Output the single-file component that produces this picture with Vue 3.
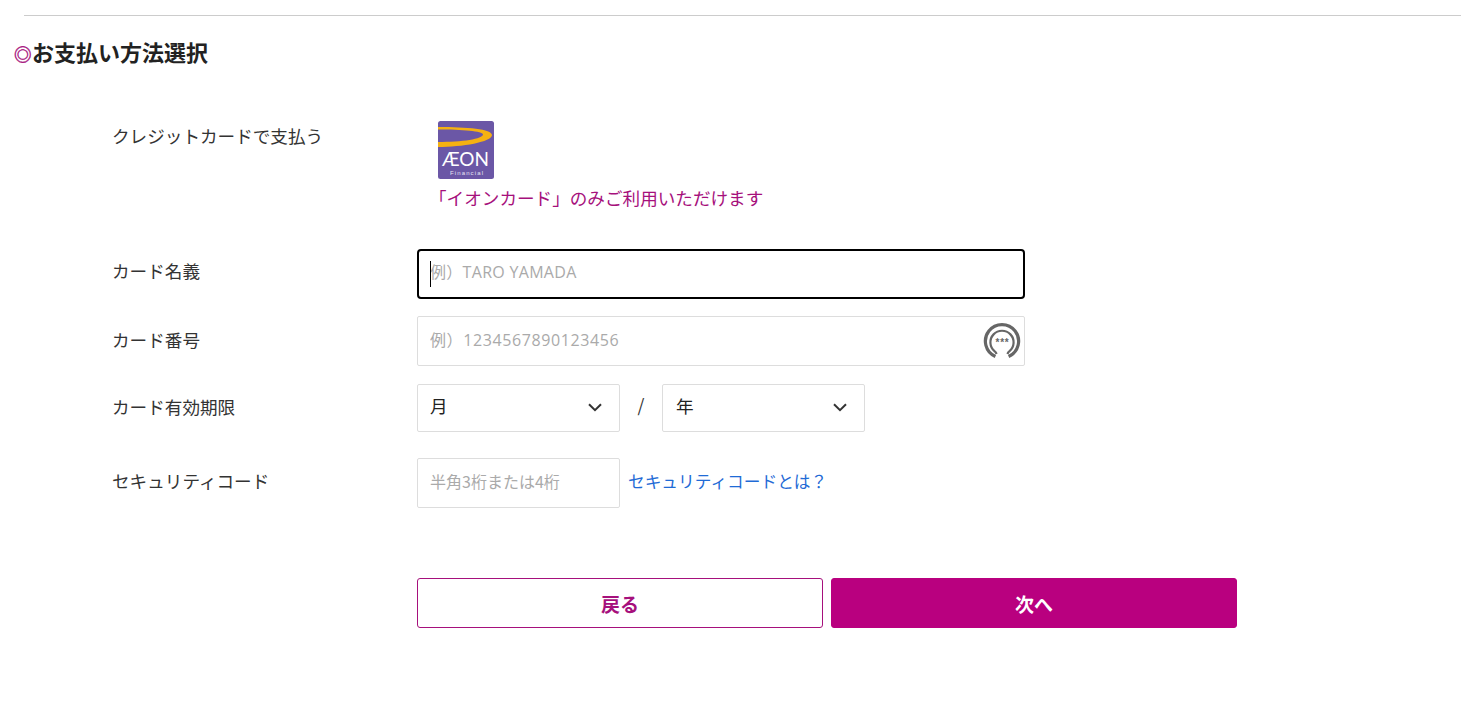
<script setup>
const months = ['月', '1', '2', '3', '4', '5', '6', '7', '8', '9', '10', '11', '12']
const years = ['年', '2024', '2025', '2026', '2027', '2028']
</script>

<template>
  <main class="page">
    <hr class="rule" />
    <h2 class="title"><span class="mark">◎</span>お支払い方法選択</h2>

    <section class="row row-card">
      <div class="label top">クレジットカードで支払う</div>
      <div class="card-info">
        <svg class="logo" width="58" height="60" viewBox="0 0 58 60" aria-label="AEON Financial">
          <rect x="1" y="1" width="56" height="58" rx="2.5" fill="#6b57a6" />
          <path d="M1 7 C30 7 55 9 55 15 C55 22 25 27 1 27 L1 22 C25 22 46 19 46 14.5 C46 11 25 9.5 1 9.5 Z" fill="#f5b112" />
          <text x="28.5" y="46" class="logo-word" textLength="47" lengthAdjust="spacingAndGlyphs">ÆON</text>
          <text x="29.5" y="55" class="logo-sub" textLength="33">Financial</text>
        </svg>
        <p class="note">「イオンカード」のみご利用いただけます</p>
      </div>
    </section>

    <section class="row row-name">
      <label class="label" for="holder">カード名義</label>
      <div class="field wide">
        <input id="holder" class="input focused" type="text" placeholder="例）TARO YAMADA" />
        <span class="caret"></span>
      </div>
    </section>

    <section class="row row-number">
      <label class="label" for="number">カード番号</label>
      <div class="field wide">
        <input id="number" class="input digits" type="text" placeholder="例）1234567890123456" />
        <svg class="mask-icon" width="38" height="38" viewBox="0 0 38 38">
          <path d="M12.4 34.5 A16.6 16.6 0 1 1 25.6 34.5" fill="none" stroke="#666" stroke-width="3.2" />
          <path d="M13.6 32 C13 30.5 12.5 30 11.5 29.2 A11.6 11.6 0 1 1 26.5 29.2 C25.5 30 25 30.5 24.4 32" fill="none" stroke="#666" stroke-width="2.2" />
          <text x="19.5" y="23.5" class="stars">***</text>
        </svg>
      </div>
    </section>

    <section class="row row-expiry">
      <div class="label">カード有効期限</div>
      <div class="expiry">
        <div class="select-wrap">
          <select class="select month" aria-label="月">
            <option v-for="m in months" :key="m">{{ m }}</option>
          </select>
          <svg class="chevron" width="14" height="9" viewBox="0 0 14 9">
            <path d="M1 1.2 L7 7.2 L13 1.2" fill="none" stroke="#333" stroke-width="2" />
          </svg>
        </div>
        <span class="slash">/</span>
        <div class="select-wrap">
          <select class="select" aria-label="年">
            <option v-for="y in years" :key="y">{{ y }}</option>
          </select>
          <svg class="chevron" width="14" height="9" viewBox="0 0 14 9">
            <path d="M1 1.2 L7 7.2 L13 1.2" fill="none" stroke="#333" stroke-width="2" />
          </svg>
        </div>
      </div>
    </section>

    <section class="row row-cvv">
      <label class="label" for="cvv">セキュリティコード</label>
      <div class="cvv">
        <input id="cvv" class="input short" type="text" placeholder="半角3桁または4桁" />
        <a class="help" href="#">セキュリティコードとは？</a>
      </div>
    </section>

    <div class="actions">
      <button class="btn back" type="button">戻る</button>
      <button class="btn next" type="button">次へ</button>
    </div>
  </main>
</template>

<style>
html, body { background: #fff; }
</style>

<style scoped>
.page {
  height: 707px;
  box-sizing: border-box;
  padding-top: 15px;
  overflow: hidden;
  font-family: "Noto Sans CJK JP", "Noto Sans", "Liberation Sans", sans-serif;
  color: #222;
}
.rule {
  margin: 0 0 0 24px;
  height: 1px;
  border: 0;
  background: #ccc;
}
.title {
  margin: 15px 0 0 14px;
  height: 40px;
  line-height: 40px;
  font-size: 22px;
  font-weight: 700;
  color: #222;
}
.mark {
  font-size: 17.6px;
  font-weight: 700;
  color: #a6107c;
  -webkit-text-stroke: 0.4px #a6107c;
  display: inline-block;
  width: 18px;
}
.row {
  display: grid;
  grid-template-columns: 305px 1fr;
  margin-left: 112px;
  align-items: center;
}
.row-card { margin-top: 50px; align-items: start; }
.row-name { margin-top: 38px; }
.row-number { margin-top: 17px; }
.row-expiry { margin-top: 18px; }
.row-cvv { margin-top: 26px; }
.label {
  font-size: 17.6px;
  line-height: 30px;
  color: #333;
  padding-bottom: 3px;
}
.label.top { padding-bottom: 0; }
.row-name .label { padding-bottom: 7px; }
.row-cvv .label { padding-bottom: 5px; }
.card-info { padding-left: 12px; }
.logo { display: block; margin: -1px 0 0 8px; }
.logo-word {
  font-family: Lato, "Liberation Sans", sans-serif;
  font-size: 19px;
  font-weight: 400;
  fill: #fff;
  text-anchor: middle;
}
.logo-sub {
  font-family: "Liberation Sans", sans-serif;
  font-size: 6px;
  fill: #e8e4f4;
  text-anchor: middle;
}
.note {
  margin: 5px 0 0;
  font-size: 17.6px;
  line-height: 26px;
  color: #a6107c;
  white-space: nowrap;
}
.field { position: relative; }
.wide { width: 608px; }
.input {
  display: block;
  width: 100%;
  height: 50px;
  box-sizing: border-box;
  padding: 0 12px 5px;
  border: 1px solid #ddd;
  border-radius: 2px;
  background: #fff;
  font-family: "Open Sans", "Noto Sans CJK JP", sans-serif;
  font-size: 16px;
  letter-spacing: 0.3px;
  color: #333;
  outline: none;
}
.input::placeholder { color: #aaa; opacity: 1; }
.input.digits { letter-spacing: 0.6px; padding-bottom: 3px; }
.input.short {
  font-family: "Noto Sans CJK JP", sans-serif;
  letter-spacing: 0;
}
.input.focused {
  border: 2px solid #000;
  border-radius: 4px;
  padding: 0 11px 5px;
}
.caret {
  position: absolute;
  left: 13px;
  top: 12px;
  width: 1px;
  height: 26px;
  background: #000;
}
.mask-icon {
  position: absolute;
  right: 4px;
  top: 6px;
}
.stars {
  font-family: "Liberation Sans", sans-serif;
  font-size: 10px;
  font-weight: 700;
  letter-spacing: 0.8px;
  fill: #666;
  text-anchor: middle;
}
.expiry {
  display: flex;
  align-items: center;
}
.select-wrap {
  position: relative;
  width: 203px;
  height: 48px;
}
.select {
  appearance: none;
  -webkit-appearance: none;
  display: block;
  width: 100%;
  height: 100%;
  box-sizing: border-box;
  padding: 0 13px 5px;
  border: 1px solid #ddd;
  border-radius: 2px;
  background: #fff;
  font: inherit;
  font-size: 17.6px;
  color: #222;
  outline: none;
}
.select.month { padding-left: 12px; }
.chevron {
  position: absolute;
  right: 18px;
  top: 19px;
  pointer-events: none;
}
.slash {
  width: 42px;
  text-align: center;
  font-size: 17.6px;
  color: #333;
  padding-bottom: 7px;
}
.cvv {
  display: flex;
  align-items: center;
  gap: 8px;
}
.short { width: 203px; }
.help {
  font-size: 16.7px;
  color: #1f6bd6;
  text-decoration: none;
  padding-bottom: 5px;
}
.actions {
  display: flex;
  gap: 8px;
  margin: 70px 0 0 417px;
}
.btn {
  width: 406px;
  height: 50px;
  box-sizing: border-box;
  border-radius: 3px;
  border: 1px solid #a6107c;
  font: inherit;
  font-size: 19px;
  font-weight: 700;
}
.back { background: #fff; color: #a6107c; }
.next { background: #b9007f; border-color: #b9007f; color: #fff; }
</style>
